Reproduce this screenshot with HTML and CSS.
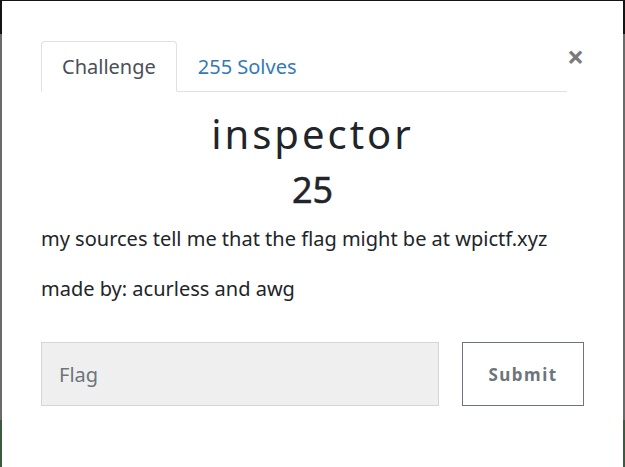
FILE: index.html
```html
<!DOCTYPE html>
<html>
<head>
<meta charset="utf-8">
<link rel="stylesheet" href="styles.css">
</head>
<body>
<div class="modal">
  <div class="modal-body">
    <div class="top-row">
      <ul class="tabs">
        <li class="tab active">Challenge</li>
        <li class="tab link">255 Solves</li>
      </ul>
      <button class="close" aria-label="Close">&times;</button>
    </div>
    <h2 class="title">inspector</h2>
    <h3 class="value">25</h3>
    <p class="desc">my sources tell me that the flag might be at wpictf.xyz</p>
    <p class="desc">made by: acurless and awg</p>
    <form class="flag-row">
      <input class="flag-input" type="text" placeholder="Flag">
      <button class="submit" type="button">Submit</button>
    </form>
  </div>
</div>
</body>
</html>
```
FILE: styles.css
```css
html, body {
  margin: 0;
  padding: 0;
  width: 625px;
  height: 467px;
  overflow: hidden;
}
body {
  background: linear-gradient(to bottom, #141414 0, #141414 34px, #6a6a6a 34px, #6a6a6a 420px, #3e5a3e 420px);
  font-family: "Noto Sans", "Open Sans", sans-serif;
  padding: 1px 2px 0 2px;
  box-sizing: border-box;
}
.modal {
  background: #fff;
  width: 621px;
  height: 466px;
}
.modal-body {
  padding: 40px 39px 0 39px;
}
.top-row {
  display: flex;
  align-items: flex-start;
  justify-content: space-between;
}
.tabs {
  list-style: none;
  margin: 0;
  padding: 0;
  display: flex;
  flex: 0 0 526px;
  border-bottom: 1px solid #dee2e6;
}
.tab {
  font-size: 20px;
  line-height: 30px;
  padding: 10px 20px 9px 20px;
  border: 1px solid transparent;
  border-top-left-radius: 4px;
  border-top-right-radius: 4px;
  margin-bottom: -1px;
}
.tab.active {
  color: #495057;
  border-color: #dee2e6 #dee2e6 #fff;
  background: #fff;
}
.tab.link {
  color: #337ab7;
}
.close {
  margin-top: 4px;
  margin-right: 1px;
  background: none;
  border: 0;
  padding: 0;
  font-family: "Noto Sans", sans-serif;
  font-size: 30px;
  font-weight: 700;
  line-height: 24px;
  color: #7a7a7a;
}
.title {
  margin: 18px 0 0 0;
  text-align: center;
  font-size: 40px;
  font-weight: 400;
  letter-spacing: 3px;
  line-height: 48px;
  color: #212529;
}
.value {
  margin: 10px 0 0 0;
  text-align: center;
  font-size: 36px;
  font-weight: 400;
  -webkit-text-stroke: 0.5px #212529;
  line-height: 43px;
  color: #212529;
}
.desc {
  margin: 13px 0 0 0;
  font-size: 20px;
  line-height: 30px;
  color: #212529;
}
.desc + .desc {
  margin-top: 20px;
}
.flag-row {
  display: flex;
  margin-top: 38px;
  gap: 23px;
}
.flag-input {
  width: 398px;
  height: 64px;
  box-sizing: border-box;
  background: #efefef;
  border: 1px solid #d3d6d9;
  padding: 0 17px;
  font-family: "Noto Sans", sans-serif;
  font-size: 20px;
  color: #495057;
  outline: none;
}
.flag-input::placeholder {
  color: #6c757d;
  opacity: 1;
}
.submit {
  width: 122px;
  height: 64px;
  box-sizing: border-box;
  background: #fff;
  border: 1px solid #6c757d;
  color: #6c757d;
  font-family: "Noto Sans", sans-serif;
  font-size: 17px;
  font-weight: 700;
  letter-spacing: 1.5px;
}
```
